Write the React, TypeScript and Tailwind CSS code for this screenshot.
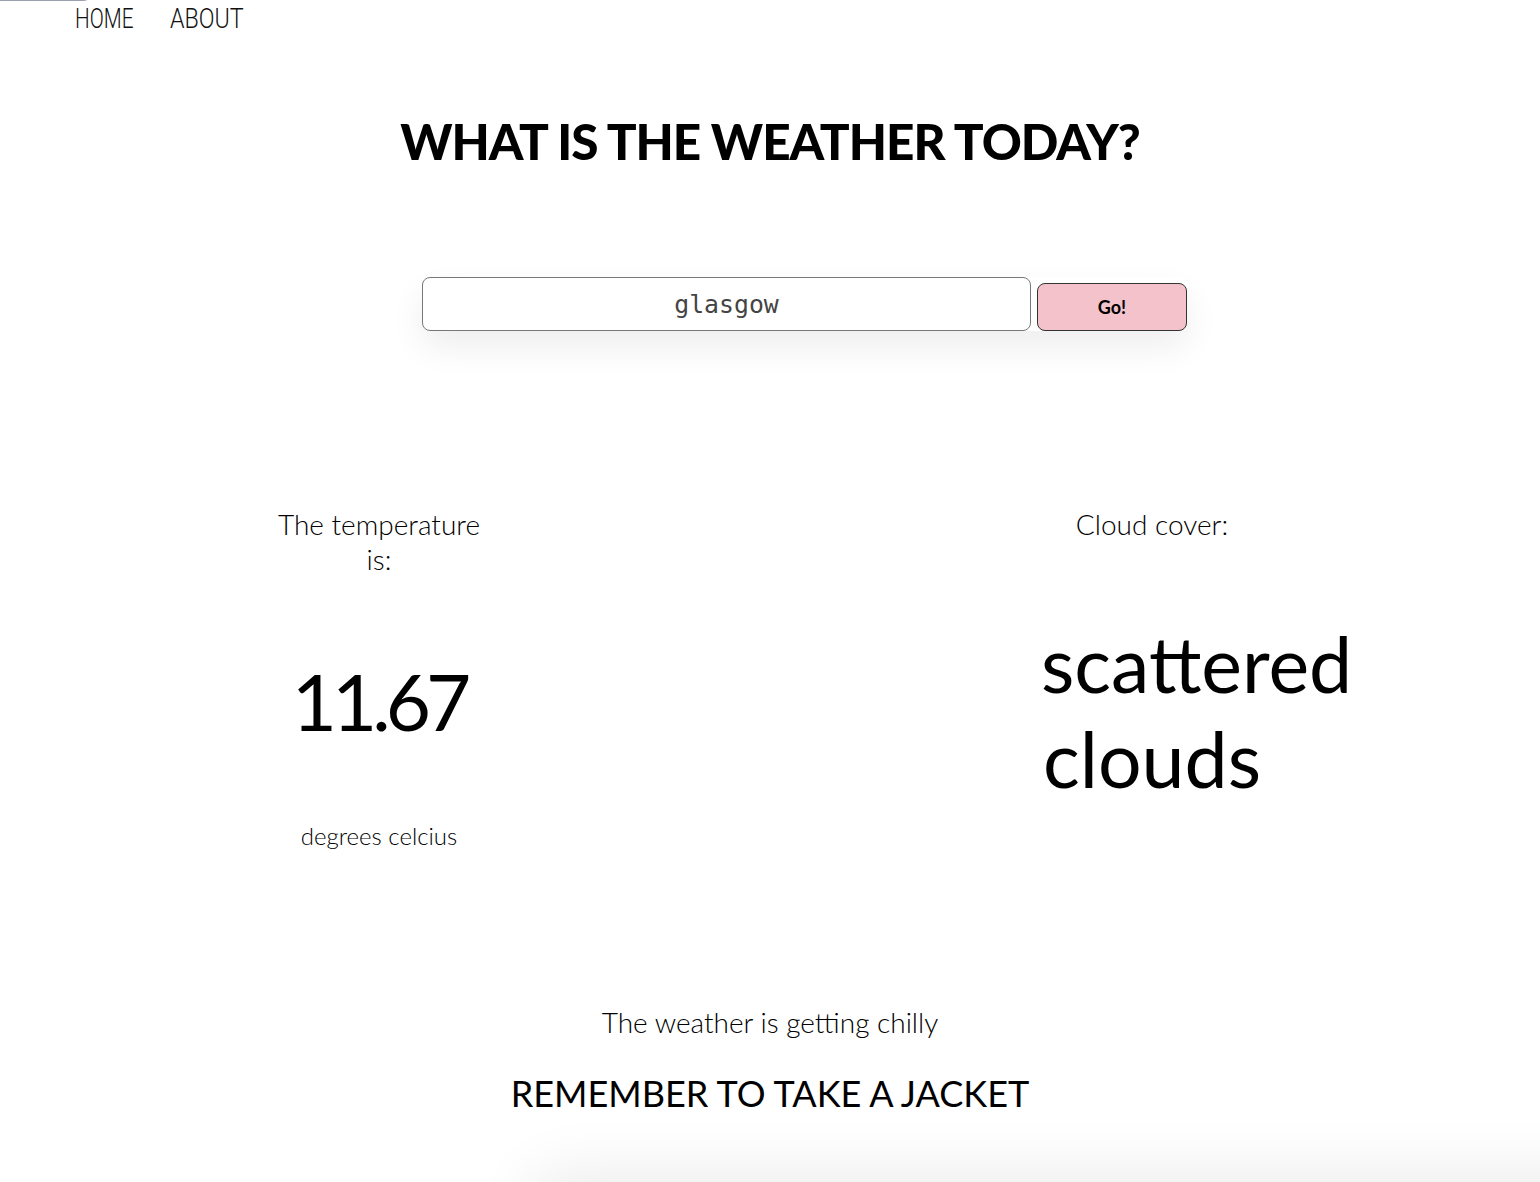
import React from "react";

export default function App() {
  return (
    <div className="relative h-[1182px] overflow-hidden bg-white text-black" style={{ fontFamily: "Lato, 'Noto Sans', sans-serif" }}>
      <div className="absolute left-0 top-[-20px] h-[21px] w-[93px] rounded-br-[10px] border-b border-r border-gray-400" />
      <nav className="flex pl-[75px] pt-[2px] text-[28px] font-light leading-[34px] text-[#111]" style={{ fontFamily: "Roboto, sans-serif" }}>
        <a className="w-[95px] origin-left scale-x-[0.74] whitespace-nowrap">HOME</a>
        <a className="w-[100px] origin-left scale-x-[0.83] whitespace-nowrap">ABOUT</a>
      </nav>

      <h1 className="mt-[75px] text-center text-[49.5px] font-black leading-[60px] tracking-[-1px]">WHAT IS THE WEATHER TODAY?</h1>

      <div className="mt-[106px] flex pl-[422px]">
        <form className="flex items-end gap-[6px] rounded-[10px] shadow-[0_16px_34px_rgba(0,0,0,0.07)]" onSubmit={(e) => e.preventDefault()}>
          <input
            defaultValue="glasgow"
            className="h-[54px] w-[609px] rounded-[8px] border border-[#777] bg-white text-center text-[24.8px] font-light text-[#444] outline-none"
            style={{ fontFamily: "'DejaVu Sans Mono', 'Liberation Mono', monospace" }}
          />
          <button className="h-[48px] w-[150px] rounded-[8px] border border-[#333] bg-[#f4c2cb] text-[18px] font-bold">Go!</button>
        </form>
      </div>

      <div className="mt-[176px] flex items-start">
        <div className="ml-[268px] flex w-[222px] flex-col items-center text-center">
          <p className="text-[28px] font-light leading-[35px] text-black">The temperature is:</p>
          <p className="mt-[84px] text-[78px] font-normal leading-[80px] tracking-[-5px]">11.67</p>
          <p className="mt-[80px] text-[24px] font-light leading-[30px] text-black">degrees celcius</p>
        </div>
        <div className="ml-[551px] flex w-[222px] flex-col items-center text-center">
          <p className="text-[28px] font-light leading-[35px] text-black">Cloud cover:</p>
          <p className="mt-[74px] w-[222px] text-[77px] font-normal leading-[95px]">scattered clouds</p>
        </div>
      </div>

      <p className="mt-[154px] text-center text-[28px] font-light leading-[35px]">The weather is getting chilly</p>
      <p className="mt-[33px] text-center text-[36px] font-normal leading-[40px]">REMEMBER TO TAKE A JACKET</p>

      <div className="ml-[525px] mt-[76px] h-[200px] w-[1200px] rounded-[40px] bg-white shadow-[0_-20px_60px_rgba(0,0,0,0.07)]" />
    </div>
  );
}
